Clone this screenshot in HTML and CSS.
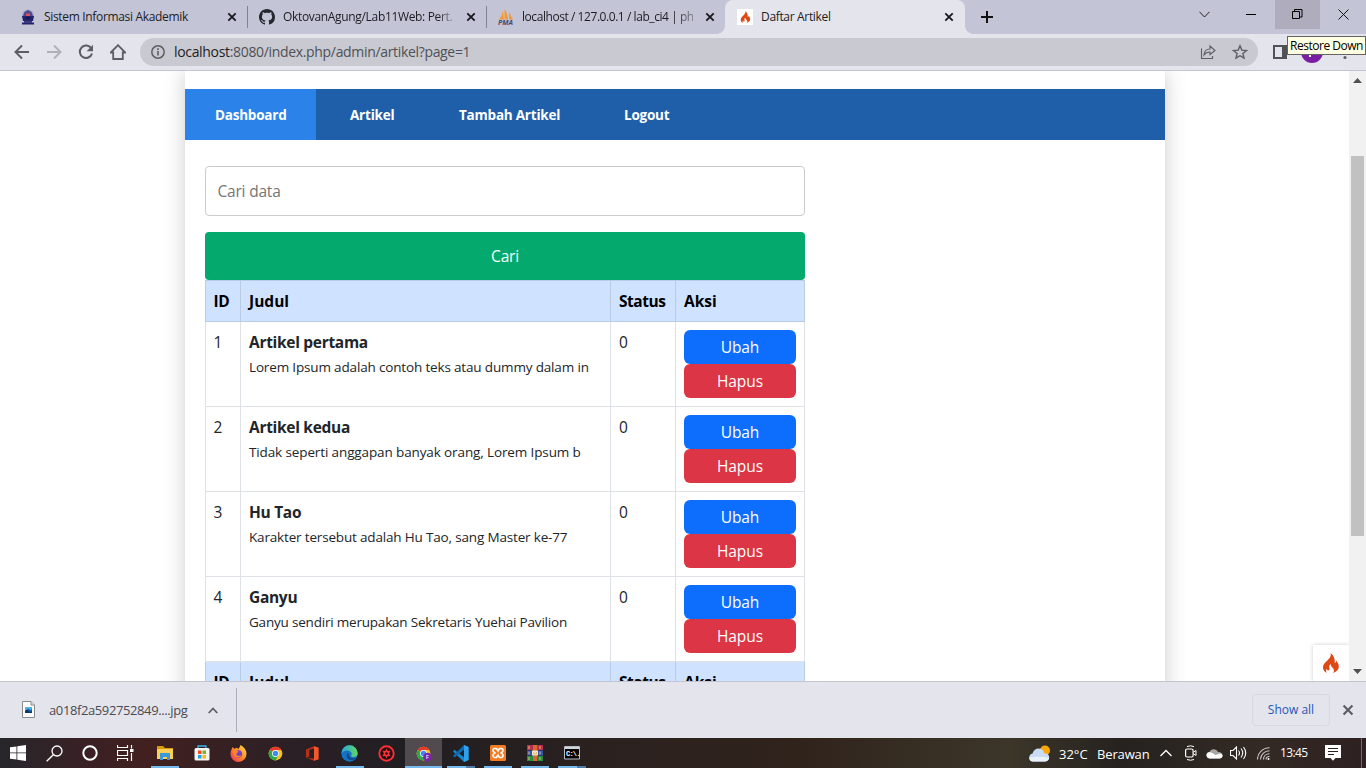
FILE: index.html
```html
<!DOCTYPE html>
<html lang="id">
<head>
<meta charset="utf-8">
<title>Daftar Artikel</title>
<link rel="stylesheet" href="styles.css">
</head>
<body>
<svg class="defs" width="0" height="0">
  <defs>
    <symbol id="close" viewBox="0 0 10 10"><path d="M1.3 1.3l7.4 7.4M8.7 1.3L1.3 8.7" stroke="currentColor" stroke-width="1.8" fill="none"/></symbol>
    <symbol id="flame" viewBox="0 0 16 20"><path d="M7.6 0c.8 2.6-.3 4.3-2.3 6.5C3 9 0 11 0 14.400c0 2.500 1.500 4.500 3.900 5.400-1-1.300-1.100-2.900-.2-4.100.2 1.100.8 1.700 1.600 1.700 1.600 0 1.300-1.700 1-2.900-.3-1.500.3-2.700 1.500-3.500-.2 1.700.6 2.500 1.600 3.500 1.500 1.500 2.400 3.400.7 5.300 3-.8 5.700-3 5.700-6.300 0-2.700-1.700-4.200-2.700-6.200.1 1.500-.4 2.500-1.400 2.800C12.200 6.300 10.800 2.300 7.600 0z" fill="#dd4814"/></symbol>
    <symbol id="chrome" viewBox="0 0 24 24"><circle cx="12" cy="12" r="11" fill="#fbc116"/><path d="M12 12L2.500 6.500A11 11 0 0 1 21.500 6.500H12z" fill="#e33b2e"/><path d="M2.500 6.500A11 11 0 0 0 12 23l4.800-8.300L12 12z" fill="#2da94f"/><circle cx="12" cy="12" r="5.500" fill="#fff"/><circle cx="12" cy="12" r="4.300" fill="#4086f4"/></symbol>
  </defs>
</svg>
<div class="screen">
  <header class="tabstrip">
    <div class="tab">
      <svg class="fav" viewBox="0 0 16 16"><circle cx="8" cy="6.500" r="6" fill="#a9a4c9"/><path d="M3 7l1.500-4L8 1l3.500 2L13 7v5H3z" fill="#4d4a8c"/><path d="M2 7h12l-1 5H3zM2 13.500h12v2H2z" fill="#24236e"/><path d="M4 12h8v2H4z" fill="#3c3a80"/><path d="M6 4.500h4V7H6z" fill="#d6506b"/><path d="M6 8h4v2H6z" fill="#171650"/></svg>
      <span class="tab-title t1">Sistem Informasi Akademik</span>
      <svg class="x"><use href="#close"/></svg>
    </div>
    <div class="tab">
      <svg class="fav" viewBox="0 0 16 16"><path fill="#24292f" d="M8 0C3.580 0 0 3.580 0 8c0 3.540 2.290 6.530 5.470 7.590.4.070.55-.17.55-.38 0-.19-.01-.82-.01-1.490-2.010.37-2.530-.49-2.690-.94-.09-.23-.48-.94-.82-1.130-.28-.15-.68-.52-.01-.53.63-.01 1.080.58 1.230.82.72 1.210 1.870.87 2.330.66.07-.52.28-.87.51-1.070-1.780-.2-3.640-.89-3.640-3.950 0-.87.31-1.590.82-2.150-.08-.2-.36-1.020.08-2.120 0 0 .67-.21 2.200.82.64-.18 1.320-.27 2-.27s1.360.09 2 .27c1.530-1.040 2.200-.82 2.200-.82.44 1.100.16 1.920.08 2.120.51.56.82 1.270.82 2.150 0 3.070-1.870 3.750-3.650 3.950.29.25.54.73.54 1.480 0 1.070-.01 1.930-.01 2.200 0 .21.15.46.55.38A8.010 8.010 0 0 0 16 8c0-4.420-3.580-8-8-8z"/></svg>
      <span class="tab-title t2">OktovanAgung/Lab11Web: Pert.</span>
      <svg class="x"><use href="#close"/></svg>
    </div>
    <div class="tab nosep">
      <svg class="fav" viewBox="0 0 16 16"><path d="M1 10.500Q4 7 5 2l1 8.500zM6.500 10.500L6.500 0Q10 5 10 10.500zM11 10.500V3q2 4 4 7.500z" fill="#f49b2f"/><text x="0" y="15.500" class="pma" textLength="15" lengthAdjust="spacingAndGlyphs">PMA</text></svg>
      <span class="tab-title t3">localhost / 127.0.0.1 / lab_ci4 | ph</span>
      <svg class="x"><use href="#close"/></svg>
    </div>
    <div class="tab active">
      <span class="fav white"><svg width="11" height="12"><use href="#flame"/></svg></span>
      <span class="tab-title t4">Daftar Artikel</span>
      <svg class="x"><use href="#close"/></svg>
    </div>
    <svg class="plus" viewBox="0 0 12 12"><path d="M6 0v12M0 6h12" stroke="#111" stroke-width="2"/></svg>
    <div class="winctl">
      <span class="menu"><svg width="11" height="7"><path d="M.5.8L5.500 6l5-5.200" fill="none" stroke="#222"/></svg></span>
      <span class="min"><svg width="10" height="2"><path d="M0 .5h10" stroke="#000"/></svg></span>
      <span class="hover"><svg width="11" height="11"><path d="M.5 2.500h7v7h-7zM2.500 2.500v-2h7.500v7.500H7.500" fill="none" stroke="#000"/></svg></span>
      <span><svg width="11" height="11"><path d="M.5.5l10 10M10.500.5l-10 10" stroke="#111" fill="none"/></svg></span>
    </div>
  </header>

  <div class="toolbar">
    <svg class="tool" viewBox="0 0 16 16"><path d="M15 8H2M8 1.500L1.500 8 8 14.500" fill="none" stroke="#5b5e63" stroke-width="1.900"/></svg>
    <svg class="tool" viewBox="0 0 16 16"><path d="M1 8h13M8 1.500L14.500 8 8 14.500" fill="none" stroke="#b0b0b8" stroke-width="1.900"/></svg>
    <svg class="tool" viewBox="0 0 16 16"><path d="M13.300 4.500A6.200 6.200 0 1 0 14 9.500" fill="none" stroke="#5b5e63" stroke-width="2"/><path d="M15 .8v6.400H8.600z" fill="#5b5e63"/></svg>
    <svg class="tool" viewBox="0 0 16 16"><path d="M.8 8.500L8 1.200l7.200 7.300h-2.400V15H3.200V8.500z" fill="none" stroke="#5b5e63" stroke-width="1.800"/></svg>
    <div class="omnibox">
      <svg width="14" height="14" viewBox="0 0 14 14"><circle cx="7" cy="7" r="6.200" fill="none" stroke="#5b5e63" stroke-width="1.500"/><path d="M7 6v4.500M7 3.300v1.600" stroke="#5b5e63" stroke-width="1.600"/></svg>
      <span class="url"><b>localhost</b>:8080/index.php/admin/artikel?page=1</span>
      <svg class="share" width="16" height="16" viewBox="0 0 16 16"><path d="M1.500 4.500v10h11V12M4 11c.3-4 2.500-6 6-6V2l5 4.500-5 4V8C7.500 8 5.500 8.800 4 11z" fill="none" stroke="#5b5e63" stroke-width="1.100"/></svg>
      <svg width="16" height="16" viewBox="0 0 16 16"><path d="M8 1.800l1.800 4.300 4.700.4-3.600 3 1.100 4.600L8 11.700l-4 2.400 1.100-4.600-3.600-3 4.700-.4z" fill="none" stroke="#5b5e63" stroke-width="1.400"/></svg>
    </div>
    <svg class="panel" width="14" height="14"><path d="M1 1h12v12H1z" fill="#e4e4ed" stroke="#4f5257" stroke-width="2"/><path d="M9 1h5v12H9z" fill="#4f5257"/></svg>
    <span class="avatar"></span>
    <svg class="dots" width="4" height="16"><circle cx="2" cy="2" r="1.600"/><circle cx="2" cy="8" r="1.600"/><circle cx="2" cy="13.500" r="1.600"/></svg>
    <div class="tooltip"><span>Restore Down</span></div>
  </div>

  <div class="viewport">
    <div class="page">
      <div class="container">
        <nav class="nav">
          <a class="on"><span>Dashboard</span></a><a class="w2"><span>Artikel</span></a><a class="w3"><span>Tambah Artikel</span></a><a><span>Logout</span></a>
        </nav>
        <main class="main">
          <div class="search"><span>Cari data</span></div>
          <div class="submit"><span>Cari</span></div>
          <table class="table">
            <colgroup><col class="c1"><col class="c2"><col class="c3"><col class="c4"></colgroup>
            <thead><tr><th>ID</th><th class="wide">Judul</th><th>Status</th><th class="wide">Aksi</th></tr></thead>
            <tbody>
              <tr><td>1</td><td><b>Artikel pertama</b><p class="p1">Lorem Ipsum adalah contoh teks atau dummy dalam in</p></td><td>0</td><td><a class="btn">Ubah</a><a class="btn red">Hapus</a></td></tr>
              <tr><td>2</td><td><b>Artikel kedua</b><p class="p2">Tidak seperti anggapan banyak orang, Lorem Ipsum b</p></td><td>0</td><td><a class="btn">Ubah</a><a class="btn red">Hapus</a></td></tr>
              <tr><td>3</td><td><b>Hu Tao</b><p class="p3">Karakter tersebut adalah Hu Tao, sang Master ke-77</p></td><td>0</td><td><a class="btn">Ubah</a><a class="btn red">Hapus</a></td></tr>
              <tr><td>4</td><td><b>Ganyu</b><p class="p4">Ganyu sendiri merupakan Sekretaris Yuehai Pavilion</p></td><td>0</td><td><a class="btn">Ubah</a><a class="btn red">Hapus</a></td></tr>
            </tbody>
            <tfoot><tr><th>ID</th><th class="wide">Judul</th><th>Status</th><th class="wide">Aksi</th></tr></tfoot>
          </table>
        </main>
      </div>
      <div class="debug"><svg width="16" height="20"><use href="#flame"/></svg></div>
    </div>
    <div class="scroll">
      <svg width="9" height="5"><path d="M0 5L4.500 0 9 5z" fill="#505050"/></svg>
      <div class="thumb"></div>
      <svg width="9" height="5"><path d="M0 0h9L4.500 5z" fill="#505050"/></svg>
    </div>
  </div>

  <div class="downloads">
    <svg class="file" width="13" height="17" viewBox="0 0 13 17"><path d="M.5.5h8.500l3.500 3.500v12.500H.5z" fill="#fdfdfd" stroke="#8a8a8a"/><path d="M9 .5V4h3.500" fill="#ddd" stroke="#8a8a8a"/><path d="M3 6h7v6H3z" fill="#1763ae"/><path d="M3 6h7v2L8 9 6.500 7.500 3 10z" fill="#52b3e6"/><path d="M3 10l2-1.500L8 11l2-1v2H3z" fill="#0b3769"/></svg>
    <span class="fname">a018f2a592752849....jpg</span>
    <svg class="up" width="10" height="7"><path d="M.7 6L5 1.500 9.300 6" fill="none" stroke="#5b5e63" stroke-width="1.800"/></svg>
    <span class="vline"></span>
    <span class="showall"><span>Show all</span></span>
    <svg class="dx"><use href="#close"/></svg>
  </div>

  <footer class="taskbar">
    <span class="sys"><svg width="16" height="16" viewBox="0 0 16 16"><path d="M0 2.300L6.500 1.400v6.100H0zM7.300 1.300L16 0v7.500H7.300zM0 8.300h6.500v6.300L0 13.700zM7.300 8.300H16V16l-8.700-1.300z" fill="#fff"/></svg></span>
    <span class="sys"><svg width="17" height="17" viewBox="0 0 17 17"><circle cx="11" cy="6" r="5" fill="none" stroke="#fff" stroke-width="1.300"/><path d="M7.300 9.700L.7 16.300" stroke="#fff" stroke-width="1.400"/></svg></span>
    <span class="sys"><svg width="16" height="16" viewBox="0 0 16 16"><circle cx="8" cy="8" r="6.700" fill="none" stroke="#fff" stroke-width="2"/></svg></span>
    <span class="sys"><svg width="17" height="16" viewBox="0 0 17 16"><path d="M.5 0v2.500h10V0M.5 5.500h10v5H.5zM.5 16v-2.500h10V16M14.500 0v3.500M14.500 8v8" fill="none" stroke="#fff" stroke-width="1.200"/><path d="M13 4h3.500v3H13z" fill="#fff"/></svg></span>
    <span class="app run"><svg width="18" height="16" viewBox="0 0 18 16"><path d="M1 1h6l2 2h8v4H1z" fill="#d99a08"/><path d="M1 4h16v10H1z" fill="#fccf56"/><path d="M4 15V8h10v7h-3v-3H7v3z" fill="#3c98dc"/></svg></span>
    <span class="app"><svg width="16" height="16" viewBox="0 0 16 16"><path d="M4 4V1h8v3" fill="none" stroke="#34b4e8" stroke-width="1.300"/><rect x=".5" y="3" width="15" height="12.500" rx="1.500" fill="#f4f4f4"/><path d="M4 5.500h3.500V9H4z" fill="#f04b23"/><path d="M8.500 5.500H12V9H8.500z" fill="#76b82a"/><path d="M4 10h3.500v3.500H4z" fill="#1ba0e5"/><path d="M8.500 10H12v3.500H8.500z" fill="#fcb913"/></svg></span>
    <span class="app"><svg width="17" height="17" viewBox="0 0 17 17"><defs><linearGradient id="ff" x1="1" y1="0" x2="0" y2="1"><stop offset="0" stop-color="#ffe34a"/><stop offset=".5" stop-color="#ff8a22"/><stop offset="1" stop-color="#f0246b"/></linearGradient></defs><path d="M10.500 0c3 2 6 4.500 6 8.800A8 8 0 0 1 .5 9C.5 6 2 3.500 2.700 2l1.500 1.700 3-1 1 1.500C9 3 10 2 10.500 0z" fill="url(#ff)"/><circle cx="8.300" cy="9" r="3.800" fill="#7540c8"/><path d="M2.500 6c3-2 4-1 6 .7L6.500 8.500c-1 2 2 3.500 5 1.700-1 3-8 4-9-4.200z" fill="#ff8429"/></svg></span>
    <span class="app"><svg width="15" height="15"><use href="#chrome"/></svg></span>
    <span class="app"><svg width="13" height="15" viewBox="0 0 13 15"><path d="M0 3.500L8 .3l4.500 1.500v11.500L8 14.700.7 12 8 12.500v-10L3.300 3.800v6.700L0 12z" fill="#b92f18"/><path d="M8 .3l4.500 1.500v11.500L8 14.700z" fill="#f2592d"/></svg></span>
    <span class="app run"><svg width="17" height="17" viewBox="0 0 17 17"><defs><linearGradient id="ed"><stop offset="0" stop-color="#28a7de"/><stop offset="1" stop-color="#62d75e"/></linearGradient></defs><circle cx="8.500" cy="8.500" r="8.200" fill="#1472c4"/><path d="M.3 8.500a8.200 8.200 0 0 1 16.400 0c0 3-3 4-6 3.200-1.500-.5 0-1 0-2.700C10.700 5.500 3.500 3.500.3 8.500z" fill="url(#ed)"/><path d="M7 7.500c-3 3-.5 7 2.500 7.500 2.500.4 4.500-.7 6-2-2 .5-5 .4-6.500-1C7.500 10.500 8 9 7 7.500z" fill="#10498c"/></svg></span>
    <span class="app"><svg width="17" height="17" viewBox="0 0 17 17"><circle cx="8.500" cy="8.500" r="7.200" fill="#210e12" stroke="#ff3038" stroke-width="1.900"/><path d="M8.500 3.600l1.200 2.300 2.900-.1-1.500 2.700 1.500 2.700-2.900-.1-1.200 2.300-1.200-2.300-2.900.1 1.500-2.700-1.500-2.700 2.900.1z" fill="#ff3038"/><circle cx="8.500" cy="8.500" r="1.300" fill="#210e12"/></svg></span>
    <span class="app run current"><svg width="16" height="17" viewBox="0 0 16 17"><use href="#chrome" width="15" height="15" y="1"/><circle cx="11.500" cy="12" r="4.300" fill="#7b24ab"/><text x="9.700" y="14.300" class="badge">F</text></svg></span>
    <span class="app run split"><svg width="17" height="17" viewBox="0 0 17 17"><path d="M12 0l4.500 2v13L12 17 1 6.500 2.500 4.800 12 12.300z" fill="#1684cf"/><path d="M12 0v4.700L2.500 12.500 1 10.800z" fill="#0b69ad"/><path d="M12 0l4.500 2v13L12 17z" fill="#2ea1ec"/></svg></span>
    <span class="app run"><svg width="16" height="16" viewBox="0 0 16 16"><rect width="16" height="16" rx="1.500" fill="#f47b22"/><path d="M4.500 3.500h2L8 6l1.500-2.500h2c3 1 1 4-1 4.500 3 .5 3.500 3.500 1 4.500h-2L8 10l-1.500 2.500h-2c-2.500-1-2-4 1-4.500-2-.5-4-3.500-1-4.500z" fill="none" stroke="#fff" stroke-width="1.600"/></svg></span>
    <span class="app run"><svg width="16" height="16" viewBox="0 0 16 16"><path d="M0 0h16v5H0z" fill="#b72c50"/><path d="M0 5.500h16v5H0z" fill="#3655b4"/><path d="M0 11h16v5H0z" fill="#258a43"/><path d="M6 0h4v16H6z" fill="#d8692e"/><path d="M5 5.500h6v5H5z" fill="#f2e3c5"/><path d="M6.500 7v2h3V7M2 1v3M13 1v3M2 6.500v3M13 6.500v3M2 12v3M13 12v3" fill="none" stroke="#e0c35e"/></svg></span>
    <span class="app run split"><svg width="16" height="14" viewBox="0 0 16 14"><path d="M.5.5h15v12.500H.5z" fill="#050505" stroke="#b8bdc2"/><path d="M1 1h14v2H1z" fill="#d0d5db"/><text x="2" y="10.200" class="cmd">C:\.</text></svg></span>
    <div class="tray">
      <svg class="weather" width="22" height="17" viewBox="0 0 22 17"><circle cx="16" cy="5.500" r="5" fill="#fba70a"/><path d="M4 16.500a4 4 0 0 1-.5-7.900C4.500 5 7 3.500 9.500 3.500c3.500 0 5 2 5.700 4.700 3 0 5 1.500 5 4.100 0 2.700-2 4.200-4.500 4.200z" fill="#c8dcf5"/><path d="M4 16.500a4 4 0 0 1-3.800-4c4-1 13-1 20 0-.3 2.500-2 4-4.500 4z" fill="#e9f1fb"/></svg>
      <span class="temp">32°C</span><span class="cond">Berawan</span>
      <svg class="chev" width="12" height="8"><path d="M.5 7L6 1.500 11.500 7" fill="none" stroke="#fff" stroke-width="1.300"/></svg>
      <svg class="cam" width="12" height="16" viewBox="0 0 12 16"><rect x=".6" y="4" width="7.500" height="8" rx="1.500" fill="none" stroke="#fff" stroke-width="1.200"/><path d="M8.500 7.200L11 5.500v5L8.500 8.800M2 1.600q3.500-1.500 7 0M2 14.500q3.500 1.500 7 0" fill="none" stroke="#fff"/></svg>
      <svg class="cloud" width="17" height="11" viewBox="0 0 17 11"><path d="M3.500 10.500a3.300 3.300 0 0 1 0-6.500C5 .5 10 0 12 4c3 0 4.500 1.500 4.500 3.500s-1.500 3-3 3z" fill="#aaa8a6"/><path d="M3.500 10.500a3.300 3.300 0 0 1-1.700-6c4-1 5 1.500 8 2.500l4-1.500c2 0 2.700 1.200 2.700 2.300 0 1.700-1.500 2.700-3 2.700z" fill="#fff"/></svg>
      <svg class="vol" width="17" height="14" viewBox="0 0 17 14"><path d="M.5 4.500H3L6.500 1v12L3 9.500H.5zM8.500 4.500q2 2.500 0 5M11 2.500q3.500 4.500 0 9M13.500 1q4.500 6 0 12" fill="none" stroke="#fff" stroke-width="1.100"/></svg>
      <svg class="wifi" width="13" height="13" viewBox="0 0 13 13"><path d="M.5 12.500C.5 6 6 .8 12.500.8M3.500 12.500c0-5 4-8.700 9-8.700M6.500 12.500c0-3.300 2.500-5.700 6-5.700M9 12.500c0-1.700 1.500-3 3.500-3" fill="none" stroke="#cfcccc" stroke-width="1.100"/><circle cx="11.500" cy="12" r="1" fill="#fff"/></svg>
      <span class="clock">13:45</span>
      <svg class="note" width="16" height="16" viewBox="0 0 16 16"><path d="M0 0h16v13h-5.500L8 15.800 5.500 13H0z" fill="#fff"/><path d="M3 3.500h10M3 6.500h10M3 9.500h6" stroke="#2b2022" stroke-width="1.100"/></svg>
      <span class="peek"></span>
    </div>
  </footer>
</div>
</body>
</html>
```
FILE: styles.css
```css
* { box-sizing: border-box; }
body { margin: 0; overflow: hidden; font-family: "Open Sans", "Noto Sans", sans-serif; }
svg { display: block; flex: none; }
.defs { position: absolute; }
.screen { width: 1366px; height: 768px; display: flex; flex-direction: column; overflow: hidden; background: #fff; }
span, b { white-space: nowrap; }

.tabstrip { height: 34px; flex: none; display: flex; background: #c4c4d7; font-size: 12px; color: #1c1c22; }
.tab { width: 239px; padding-left: 12px; display: flex; align-items: center; flex: none; position: relative; }
.tab:first-child { width: 248px; padding-left: 20px; }
.tab:nth-child(2) { padding-left: 11px; }
.tab.nosep { width: 238px; padding-left: 11px; }
.tab:not(.nosep):not(.active) { border-right: 1px solid #83838f; border-image: linear-gradient(transparent 7px, #83838f 7px, #83838f 27px, transparent 27px) 1; }
.fav { width: 16px; height: 16px; flex: none; }
.fav.white { background: #fff; display: flex; align-items: center; justify-content: center; }
.pma { font: italic bold 6.500px "Open Sans", sans-serif; fill: #4a4a6a; }
.tab-title { margin-left: 8px; width: 171px; flex: none; line-height: 20px; letter-spacing: -.33px; }
.t2 { -webkit-mask-image: linear-gradient(90deg, #000 155px, transparent 175px); mask-image: linear-gradient(90deg, #000 155px, transparent 175px); }
.t3 { letter-spacing: -.44px; -webkit-mask-image: linear-gradient(90deg, #000 150px, transparent 185px); mask-image: linear-gradient(90deg, #000 150px, transparent 185px); }
.x { width: 10px; height: 10px; margin-left: 12px; color: #17171c; }
.tab.active { width: 240px; padding-left: 12px; background: #e4e4ed; border-radius: 8px 8px 0 0; }
.tab.active .tab-title { width: 179px; }
.tab.active .x { margin-left: 4px; }
.active::before, .active::after { content: ""; position: absolute; bottom: 0; width: 8px; height: 8px; }
.active::before { left: -8px; background: radial-gradient(circle at 0 0, #c4c4d7 7.500px, #e4e4ed 8px); }
.active::after { right: -8px; background: radial-gradient(circle at 100% 0, #c4c4d7 7.500px, #e4e4ed 8px); }
.plus { width: 12px; height: 12px; margin: 11px 0 0 16px; }
.winctl { display: flex; margin-left: auto; height: 29px; }
.winctl span { width: 46px; display: flex; align-items: center; justify-content: center; }
.winctl .menu { width: 45px; }
.winctl .min { width: 48px; }
.winctl .hover { background: #afadbd; width: 45px; }

.toolbar { height: 37px; flex: none; display: flex; align-items: center; background: #e4e4ed; border-bottom: 1px solid #c4c4d2; padding-left: 14px; position: relative; }
.tool { width: 16px; height: 16px; margin-right: 16px; }
.omnibox { width: 1118px; height: 28px; border-radius: 14px; background: #c9c9d1; margin-left: -2px; padding: 0 10px 0 11px; display: flex; align-items: center; }
.omnibox .share { margin: 0 16px 0 auto; }
.url { margin-left: 9px; font-size: 14px; color: #4f5156; letter-spacing: -.33px; line-height: 20px; }
.url b { font-weight: 400; color: #1d1d22; }
.panel { margin-left: 15px; }
.avatar { width: 22px; height: 22px; border-radius: 50%; background: radial-gradient(circle at 9px 15px, #fff 1px, transparent 1.500px), #7b1fa2; margin-left: 14px; }
.dots { margin-left: 20px; fill: #5b5e63; }
.tooltip { position: absolute; left: 1287px; top: 2px; width: 79px; height: 19px; background: #ffffe1; border: 1px solid #646464; font-size: 12px; line-height: 17px; color: #000; padding-left: 2px; letter-spacing: -.48px; }

.viewport { height: 610px; flex: none; display: flex; overflow: hidden; }
.page { width: 1349px; height: 610px; overflow: hidden; padding-left: 185px; position: relative; }
.container { width: 980px; height: 700px; padding-top: 18px; background: #fff; box-shadow: 0 0 20px #ccc; }
.nav { height: 51px; background: #1f5faa; display: flex; color: #fff; font-size: 13.500px; font-weight: 700; line-height: 52px; letter-spacing: -.22px; }
.nav a { padding: 0 30px; }
.nav .on { width: 131px; background: #2b83ea; margin-right: 4px; }
.nav .w2 { width: 109px; }
.nav .w3 { width: 165px; }
.main { width: 640px; padding: 26px 20px 0; }
.search { height: 50px; border: 1px solid #ccc; border-radius: 4px; padding-left: 11.500px; line-height: 49px; font-size: 15.500px; color: #757575; letter-spacing: -.2px; }
.submit { height: 48px; margin-top: 16px; background: #04aa6d; border-radius: 4px; color: #fff; text-align: center; font-size: 15.500px; line-height: 49px; letter-spacing: -.2px; }
.table { width: 600px; table-layout: fixed; border-collapse: separate; border-spacing: 0; font-size: 15.500px; color: #212529; line-height: 24px; }
.c1 { width: 36px; } .c2 { width: 370px; } .c3 { width: 65px; } .c4 { width: 129px; }
th, td { padding: 8px 0 0 8px; text-align: left; vertical-align: top; border-right: 1px solid #dee2e6; border-bottom: 1px solid #dee2e6; }
th:first-child, td:first-child { border-left: 1px solid #dee2e6; padding-left: 7.500px; }
th { height: 41px; background: #cfe2ff; border-color: #bacbe6 !important; color: #000; letter-spacing: -.45px; }
th.wide { letter-spacing: 0; }
thead th { height: 42px; border-top: 1px solid #bacbe6; }
td { height: 85px; }
td b { display: block; letter-spacing: -.3px; }
td p { margin: 1px 0 0; font-size: 13.500px; line-height: 24px; white-space: nowrap; }
.p1 { letter-spacing: -.16px; }
.p2 { letter-spacing: -.12px; }
.p3 { letter-spacing: -.17px; }
.p4 { letter-spacing: -.2px; }
.btn { display: block; width: 112px; height: 34px; border-radius: 6px; background: #0d6efd; color: #fff; text-align: center; line-height: 35px; letter-spacing: -.1px; }
.btn.red { background: #dc3545; }
.debug { position: absolute; right: 0; bottom: 0; width: 36px; height: 36px; background: #fff; box-shadow: 0 0 4px #ccc; display: flex; align-items: center; justify-content: center; }
.scroll { width: 17px; background: #f1f1f1; display: flex; flex-direction: column; align-items: center; padding: 7px 0; justify-content: space-between; }
.thumb { width: 13px; height: 380px; background: #c1c1c1; margin: 73px 0 133px; flex: none; }

.downloads { height: 57px; flex: none; background: #e4e4ed; border-top: 1px solid #c4c4d0; display: flex; align-items: center; padding-left: 22px; }
.file { margin-top: -1px; }
.fname { margin-left: 14px; width: 159px; font-size: 13px; color: #4a4b50; letter-spacing: -.39px; }
.vline { width: 1px; height: 44px; background: #aeaeb8; margin-left: 18px; }
.showall { width: 78px; height: 32px; margin-left: auto; border: 1px solid #d8d8de; border-radius: 4px; color: #1f57b8; font-size: 12px; text-align: center; line-height: 30px; }
.dx { width: 12px; height: 12px; margin: 0 12px 0 12px; color: #5b5e63; }

.taskbar { height: 30px; flex: none; display: flex; background: linear-gradient(90deg, #26262b 0, #3a2024 90px, #42201f 150px, #2b2026 290px, #211e22 400px, #2b211f 600px, #30231c 800px, #3c3629 1010px, #252220 1120px, #332a24 1260px, #2e2022 1366px); color: #fff; }
.sys { width: 36px; display: flex; align-items: center; justify-content: center; }
.app { width: 37px; display: flex; align-items: center; justify-content: center; border-bottom: 2px solid transparent; padding-top: 2px; }
.sys:nth-child(4) { width: 35px; margin-right: 3px; }
.run { background: linear-gradient(#76b9ed, #76b9ed) center 28px / 28px 2px no-repeat border-box; }
.split { background: linear-gradient(90deg, #76b9ed 19px, #4d7da5 19px) center 28px / 28px 2px no-repeat border-box; }
.current { background: linear-gradient(#76b9ed, #76b9ed) 0 28px / 100% 2px no-repeat border-box, #514a4e border-box; }
.badge { font: 6px "Open Sans", sans-serif; fill: #fff; }
.cmd { font: bold 7px "Liberation Mono", monospace; fill: #fff; letter-spacing: -.8px; }
.tray { margin-left: auto; display: flex; align-items: center; font-size: 13px; line-height: 18px; }
.temp { margin-left: 8px; width: 38px; padding-top: 1px; }
.cond { width: 55px; padding-top: 1px; letter-spacing: -.15px; }
.chev { margin-left: 8px; }
.cam { margin-left: 13px; }
.cloud { margin-left: 9px; }
.vol { margin-left: 7px; }
.wifi { margin-left: 10px; }
.clock { margin-left: 10px; width: 30px; font-size: 12px; letter-spacing: -.6px; }
.note { margin-left: 15px; }
.peek { width: 1px; height: 30px; background: #6f6b68; margin: 0 4px 0 20px; }
```
